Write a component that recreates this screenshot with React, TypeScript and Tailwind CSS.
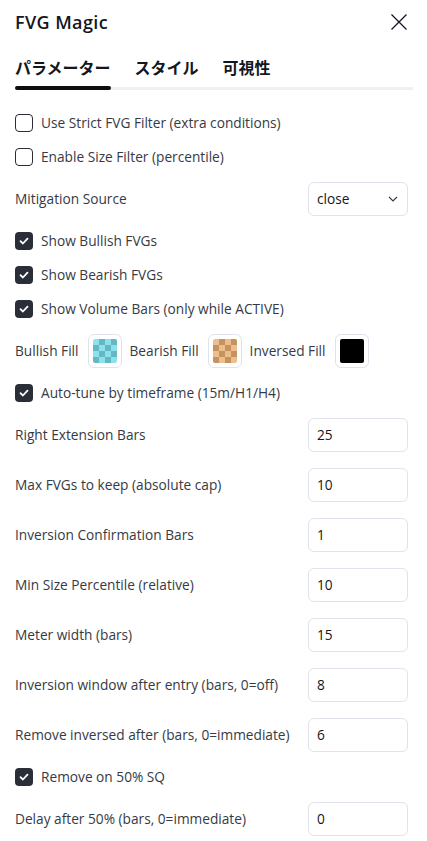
import React from "react";

const font = { fontFamily: '"Open Sans", "Noto Sans CJK JP", sans-serif' };

function CheckRow({ label, checked }: { label: string; checked?: boolean }) {
  return (
    <div className="flex h-[34px] items-center gap-[8px]">
      {checked ? (
        <div className="flex h-[18px] w-[18px] items-center justify-center rounded-[4px] bg-[#2a2e39]">
          <svg width="12" height="12" viewBox="0 0 12 12" fill="none">
            <path d="M2.5 6.2l2.4 2.3 4.6-4.9" stroke="#fff" strokeWidth="1.8" strokeLinecap="round" strokeLinejoin="round" />
          </svg>
        </div>
      ) : (
        <div className="h-[18px] w-[18px] rounded-[4px] border border-[#2a2e39] bg-white" />
      )}
      <span className="text-[13.7px] text-[#363a45]">{label}</span>
    </div>
  );
}

function InputRow({ label, value }: { label: string; value: string }) {
  return (
    <div className="flex h-[50px] items-center justify-between">
      <span className="text-[13.7px] text-[#363a45]">{label}</span>
      <div className="flex h-[34px] w-[100px] items-center rounded-[6px] border border-[#e0e3eb] px-[8px] text-[13.7px] text-[#131722]">
        {value}
      </div>
    </div>
  );
}

function Swatch({ light, dark }: { light?: string; dark?: string }) {
  const cells = Array.from({ length: 16 }, (_, i) => {
    const r = Math.floor(i / 4);
    const c = i % 4;
    return (r + c) % 2 === 0 ? light : dark;
  });
  return (
    <div className="flex h-[34px] w-[34px] items-center justify-center rounded-[6px] border border-[#e0e3eb]">
      {light ? (
        <div className="grid h-[24px] w-[24px] grid-cols-4 overflow-hidden rounded-[2px]">
          {cells.map((c, i) => (
            <div key={i} style={{ background: c }} />
          ))}
        </div>
      ) : (
        <div className="h-[24px] w-[24px] rounded-[2px] bg-black" />
      )}
    </div>
  );
}

export default function App() {
  return (
    <div className="min-h-[841px] w-[427px] bg-white" style={font}>
      <div className="flex h-[44px] items-center justify-between pl-[15px] pr-[19px]">
        <span className="text-[18px] font-semibold tracking-[0.4px] text-[#131722]">FVG Magic</span>
        <svg width="18" height="18" viewBox="0 0 18 18" fill="none">
          <path d="M1.5 1.5l15 15M16.5 1.5l-15 15" stroke="#131722" strokeWidth="1.3" />
        </svg>
      </div>

      <div className="px-[15px]">
        <div className="flex h-[42px] items-center gap-[24px] pt-[6px]">
          <span className="text-[16px] font-bold text-[#131722]">パラメーター</span>
          <span className="text-[16px] font-bold text-[#131722]">スタイル</span>
          <span className="text-[16px] font-bold text-[#131722]">可視性</span>
        </div>
        <div className="relative h-[4px] w-[398px]">
          <div className="absolute left-0 right-0 top-[1px] h-[3px] bg-[#f0f0f0]" />
          <div className="absolute left-0 top-0 h-[4px] w-[96px] rounded-full bg-[#0f0f0f]" />
        </div>
      </div>

      <div className="pl-[15px] pr-[19px] pt-[16px]">
        <CheckRow label="Use Strict FVG Filter (extra conditions)" />
        <CheckRow label="Enable Size Filter (percentile)" />
        <div className="flex h-[50px] items-center justify-between">
          <span className="text-[13.7px] text-[#363a45]">Mitigation Source</span>
          <div className="flex h-[34px] w-[100px] items-center justify-between rounded-[6px] border border-[#e0e3eb] pl-[8px] pr-[9px] text-[13.7px] text-[#131722]">
            <span>close</span>
            <svg width="10" height="6" viewBox="0 0 10 6" fill="none">
              <path d="M1 1l4 4 4-4" stroke="#363a45" strokeWidth="1.1" />
            </svg>
          </div>
        </div>
        <CheckRow label="Show Bullish FVGs" checked />
        <CheckRow label="Show Bearish FVGs" checked />
        <CheckRow label="Show Volume Bars (only while ACTIVE)" checked />
        <div className="flex h-[50px] items-center text-[13.7px] text-[#363a45]">
          <span>Bullish Fill</span>
          <div className="ml-[9px]">
            <Swatch light="#8ce1ec" dark="#66b7c3" />
          </div>
          <span className="ml-[8px]">Bearish Fill</span>
          <div className="ml-[9px]">
            <Swatch light="#ebbe8b" dark="#c6925f" />
          </div>
          <span className="ml-[8px]">Inversed Fill</span>
          <div className="ml-[9px]">
            <Swatch />
          </div>
        </div>
        <CheckRow label="Auto-tune by timeframe (15m/H1/H4)" checked />
        <InputRow label="Right Extension Bars" value="25" />
        <InputRow label="Max FVGs to keep (absolute cap)" value="10" />
        <InputRow label="Inversion Confirmation Bars" value="1" />
        <InputRow label="Min Size Percentile (relative)" value="10" />
        <InputRow label="Meter width (bars)" value="15" />
        <InputRow label="Inversion window after entry (bars, 0=off)" value="8" />
        <InputRow label="Remove inversed after (bars, 0=immediate)" value="6" />
        <CheckRow label="Remove on 50% SQ" checked />
        <InputRow label="Delay after 50% (bars, 0=immediate)" value="0" />
      </div>
    </div>
  );
}
